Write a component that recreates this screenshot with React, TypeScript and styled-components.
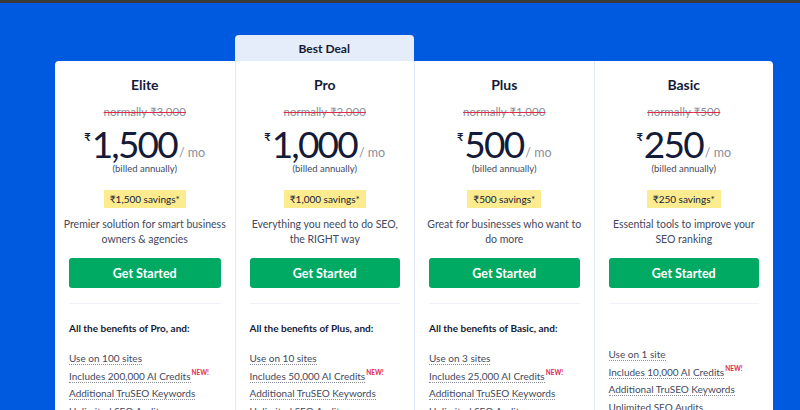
import styled, { createGlobalStyle } from 'styled-components'

interface Plan {
  name: string
  normally: string
  price: string
  savings: string
  description: string[]
  benefits?: string
  items: { text: string; isNew?: boolean }[]
  best?: boolean
}

const plans: Plan[] = [
  {
    name: 'Elite',
    normally: '₹3,000',
    price: '1,500',
    savings: '₹1,500 savings*',
    description: ['Premier solution for smart business', 'owners & agencies'],
    benefits: 'All the benefits of Pro, and:',
    items: [
      { text: 'Use on 100 sites' },
      { text: 'Includes 200,000 AI Credits', isNew: true },
      { text: 'Additional TruSEO Keywords' },
      { text: 'Unlimited SEO Audits' },
    ],
  },
  {
    name: 'Pro',
    normally: '₹2,000',
    price: '1,000',
    savings: '₹1,000 savings*',
    description: ['Everything you need to do SEO,', 'the RIGHT way'],
    benefits: 'All the benefits of Plus, and:',
    items: [
      { text: 'Use on 10 sites' },
      { text: 'Includes 50,000 AI Credits', isNew: true },
      { text: 'Additional TruSEO Keywords' },
      { text: 'Unlimited SEO Audits' },
    ],
    best: true,
  },
  {
    name: 'Plus',
    normally: '₹1,000',
    price: '500',
    savings: '₹500 savings*',
    description: ['Great for businesses who want to', 'do more'],
    benefits: 'All the benefits of Basic, and:',
    items: [
      { text: 'Use on 3 sites' },
      { text: 'Includes 25,000 AI Credits', isNew: true },
      { text: 'Additional TruSEO Keywords' },
      { text: 'Unlimited SEO Audits' },
    ],
  },
  {
    name: 'Basic',
    normally: '₹500',
    price: '250',
    savings: '₹250 savings*',
    description: ['Essential tools to improve your', 'SEO ranking'],
    items: [
      { text: 'Use on 1 site' },
      { text: 'Includes 10,000 AI Credits', isNew: true },
      { text: 'Additional TruSEO Keywords' },
      { text: 'Unlimited SEO Audits' },
    ],
  },
]

const App = () => {
  return (
    <Page>
      <GlobalStyle />
      <TopBar />
      <Plans>
        {plans.map((plan, i) => (
          <Column key={plan.name}>
            <Tab $visible={!!plan.best}>{plan.best ? 'Best Deal' : ''}</Tab>
            <Card $first={i === 0} $last={i === plans.length - 1}>
              <PlanName>{plan.name}</PlanName>
              <Normally>normally {plan.normally}</Normally>
              <PriceRow>
                <Currency>₹</Currency>
                <Amount>{plan.price}</Amount>
                <PerMonth>/ mo</PerMonth>
              </PriceRow>
              <Billed>(billed annually)</Billed>
              <Savings>{plan.savings}</Savings>
              <Description>
                {plan.description.map((line) => (
                  <div key={line}>{line}</div>
                ))}
              </Description>
              <Button>Get Started</Button>
              <Divider />
              <Features $withHeading={!!plan.benefits}>
                {plan.benefits && <Benefits>{plan.benefits}</Benefits>}
                <List>
                  {plan.items.map((item) => (
                    <Item key={item.text}>
                      <Dotted>{item.text}</Dotted>
                      {item.isNew && <NewTag>NEW!</NewTag>}
                    </Item>
                  ))}
                </List>
              </Features>
            </Card>
          </Column>
        ))}
      </Plans>
    </Page>
  )
}

const GlobalStyle = createGlobalStyle`
  html, body {
    margin: 0;
    padding: 0;
    background: #005ae0;
  }
  body {
    font-family: Lato, "Noto Sans", sans-serif;
    overflow: hidden;
  }
`

const Page = styled.div`
  width: 800px;
  height: 410px;
  background: #005ae0;
  overflow: hidden;
`

const TopBar = styled.div`
  height: 3px;
  background: #3a3a3a;
`

const Plans = styled.div`
  display: grid;
  grid-template-columns: repeat(4, 179.5px);
  margin: 32px 0 0 55px;
`

const Column = styled.div`
  display: flex;
  flex-direction: column;
  & + & > div:last-child {
    border-left: 1px solid #e1e9f7;
  }
`

const Tab = styled.div<{ $visible: boolean }>`
  height: 26px;
  display: flex;
  align-items: center;
  justify-content: center;
  border-radius: 4px 4px 0 0;
  background: ${(p) => (p.$visible ? '#e5edfa' : 'transparent')};
  color: #141b38;
  font-size: 12px;
  font-weight: 700;
`

const Card = styled.div<{ $first: boolean; $last: boolean }>`
  background: #fff;
  height: 400px;
  box-sizing: border-box;
  padding: 15px 14px 0;
  display: flex;
  flex-direction: column;
  align-items: center;
  border-top-left-radius: ${(p) => (p.$first ? '4px' : '0')};
  border-top-right-radius: ${(p) => (p.$last ? '4px' : '0')};
`

const PlanName = styled.div`
  font-size: 14px;
  font-weight: 700;
  color: #141b38;
  line-height: 18px;
`

const Normally = styled.div`
  margin-top: 10px;
  font-size: 11.5px;
  line-height: 16px;
  color: #8c8f9a;
  text-decoration: line-through;
  text-decoration-color: #df2a4a;
  text-decoration-thickness: 1px;
`

const PriceRow = styled.div`
  display: flex;
  align-items: flex-end;
  margin-top: 8px;
  color: #141b38;
`

const Currency = styled.span`
  align-self: flex-start;
  font-size: 11px;
  font-weight: 700;
  margin-top: 2px;
  margin-right: 1px;
`

const Amount = styled.span`
  font-size: 37px;
  font-weight: 400;
  line-height: 32px;
  letter-spacing: -1.8px;
`

const PerMonth = styled.span`
  font-size: 12.5px;
  line-height: 14px;
  color: #8c8f9a;
  margin-bottom: 0;
  margin-left: 2px;
`

const Billed = styled.div`
  font-size: 9.5px;
  color: #434960;
  line-height: 12px;
  margin-top: 3px;
`

const Savings = styled.div`
  margin-top: 15px;
  background: #fdeb8f;
  color: #141b38;
  font-size: 10px;
  line-height: 18px;
  padding: 0 6px;
`

const Description = styled.div`
  margin-top: 9px;
  font-size: 10.5px;
  line-height: 15px;
  color: #434960;
  text-align: center;
  white-space: nowrap;
`

const Button = styled.button`
  margin-top: 11px;
  width: 100%;
  height: 30px;
  border: none;
  border-radius: 3px;
  background: #00aa63;
  color: #fff;
  font-family: inherit;
  font-size: 12.5px;
  font-weight: 700;
`

const Divider = styled.div`
  align-self: stretch;
  height: 1px;
  background: #eef1f7;
  margin-top: 15px;
`

const Features = styled.div<{ $withHeading: boolean }>`
  align-self: stretch;
  margin-top: ${(p) => (p.$withHeading ? '17px' : '44px')};
`

const Benefits = styled.div`
  font-size: 10px;
  font-weight: 700;
  color: #141b38;
  line-height: 14px;
  margin-bottom: 17px;
`

const List = styled.ul`
  list-style: none;
  margin: 0;
  padding: 0;
  display: flex;
  flex-direction: column;
  gap: 4px;
`

const Item = styled.li`
  font-size: 10px;
  line-height: 13px;
  height: 13.5px;
  color: #434960;
  white-space: nowrap;
`

const Dotted = styled.span`
  border-bottom: 1px dotted #8c8f9a;
`

const NewTag = styled.span`
  position: relative;
  top: -5px;
  color: #df2a4a;
  font-size: 6.5px;
  line-height: 0;
  font-weight: 700;
  margin-left: 1px;
`

export default App
